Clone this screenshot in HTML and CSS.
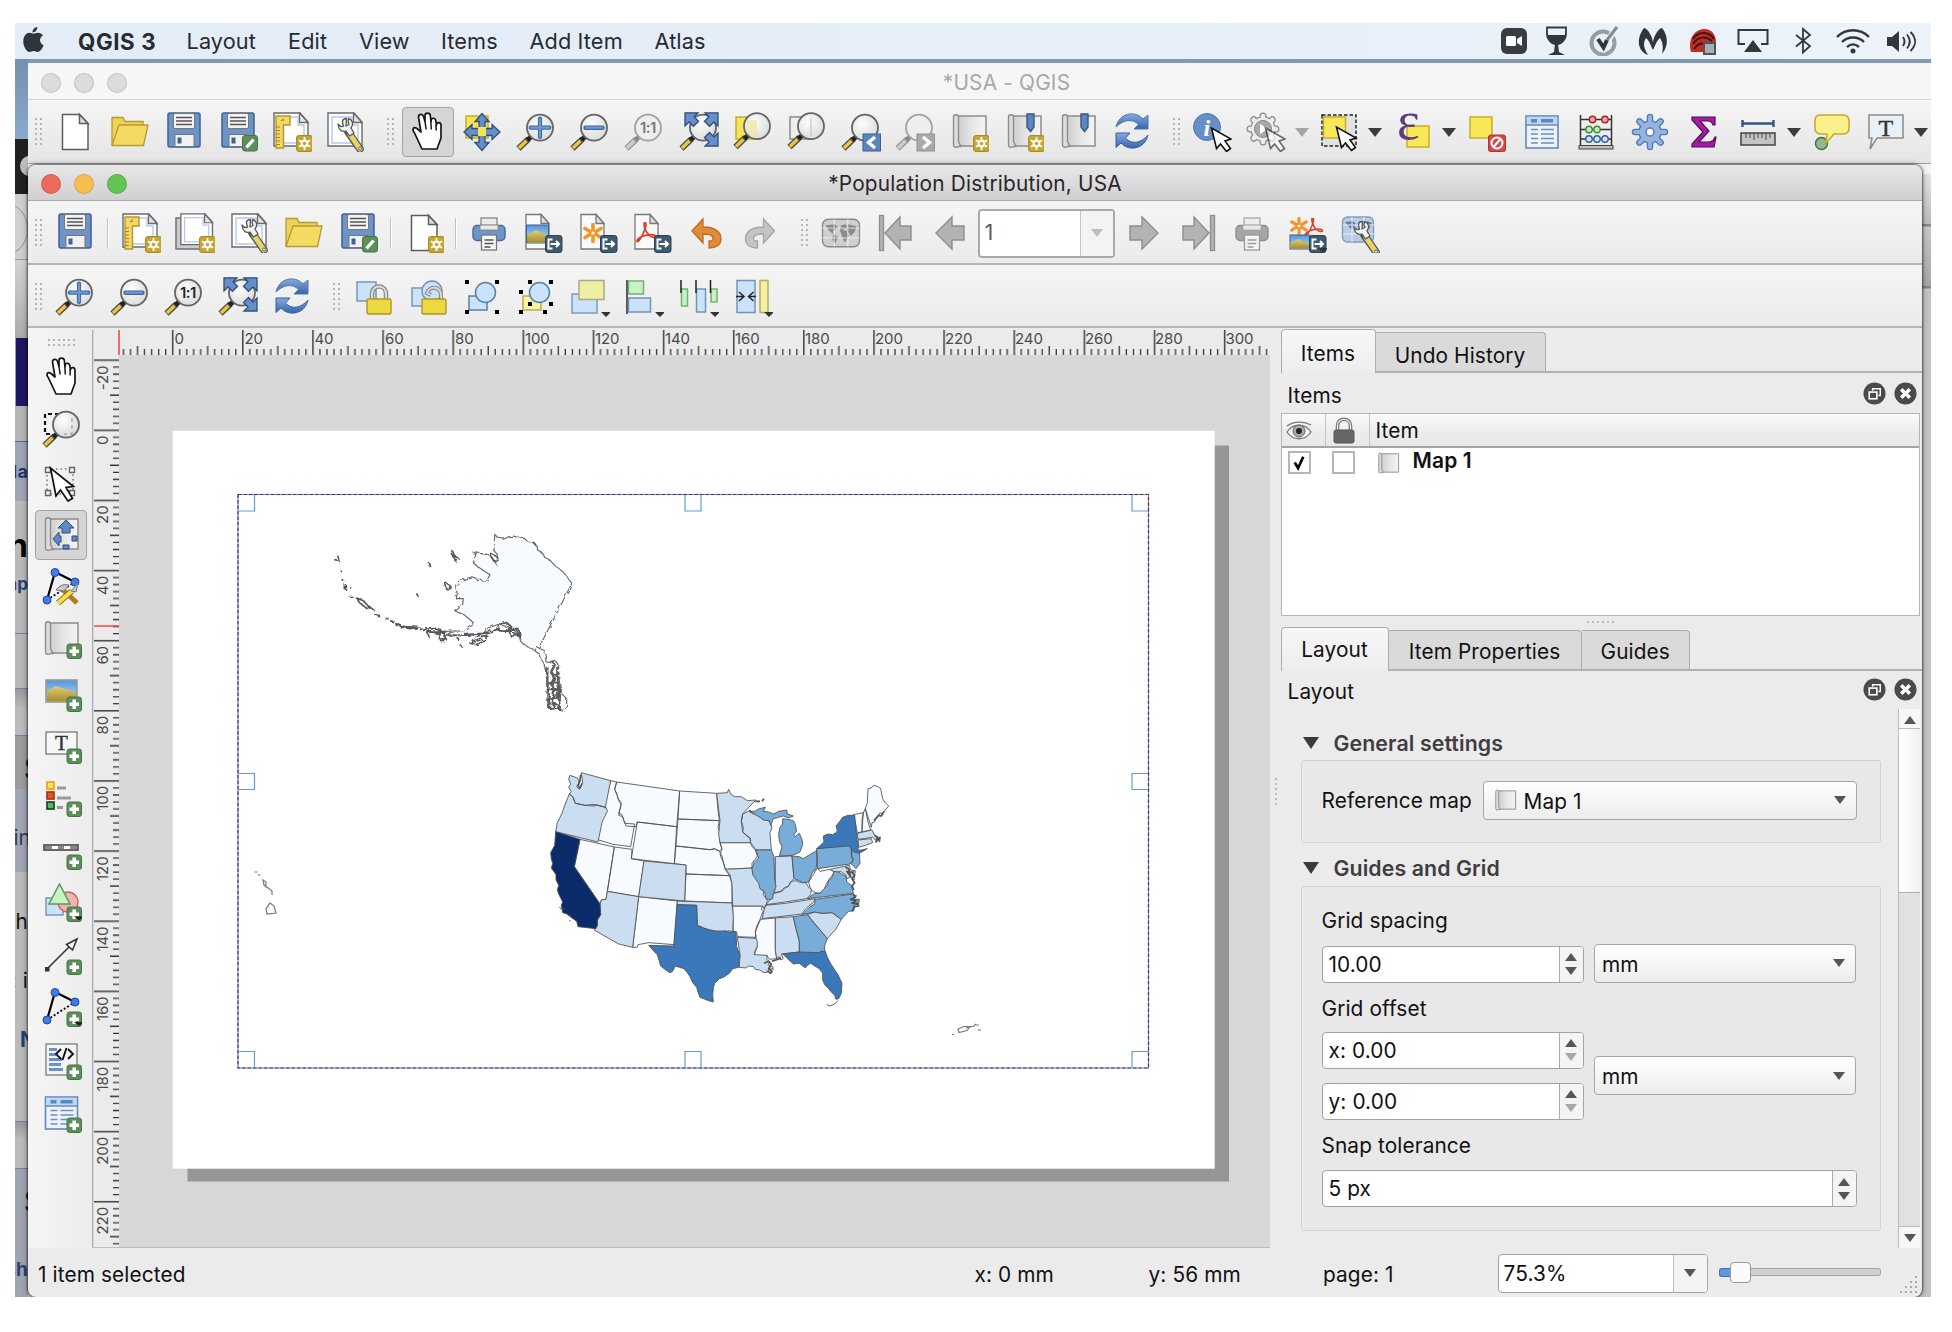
FILE: index.html
```html
<!DOCTYPE html>
<html lang="en">
<head>
<meta charset="utf-8">
<title>Population Distribution, USA</title>
<link rel="stylesheet" href="styles.css">
</head>
<body>
<svg class="defs" width="0" height="0" aria-hidden="true">
<defs>
<linearGradient id="gGrey" x1="0" x2="1" y1="0" y2="0"><stop offset="0" stop-color="#cfcfcf"/><stop offset=".5" stop-color="#e6e6e6"/><stop offset="1" stop-color="#f4f4f4"/></linearGradient>
<linearGradient id="gSky" x1="0" x2="0" y1="0" y2="1"><stop offset="0" stop-color="#4f97e0"/><stop offset="1" stop-color="#c2dff5"/></linearGradient>
<linearGradient id="gSand" x1="0" x2="0" y1="0" y2="1"><stop offset="0" stop-color="#e0cd7a"/><stop offset="1" stop-color="#a58d2c"/></linearGradient>
<linearGradient id="gBlue" x1="0" x2="0" y1="0" y2="1"><stop offset="0" stop-color="#86abdc"/><stop offset="1" stop-color="#3565a8"/></linearGradient>
<radialGradient id="gLens" cx=".4" cy=".35" r=".8"><stop offset="0" stop-color="#fdfdfd"/><stop offset="1" stop-color="#d3d6d4"/></radialGradient>
<filter id="coast" x="-5%" y="-5%" width="110%" height="110%"><feTurbulence type="fractalNoise" baseFrequency=".22" numOctaves="2" seed="4" result="n"/><feDisplacementMap in="SourceGraphic" in2="n" scale="5"/></filter>

<symbol id="star-badge" viewBox="0 0 40 40"><rect x="24.5" y="23.5" width="16" height="16" rx="2.5" fill="#c5a534" stroke="#a98c1e"/><circle cx="32.5" cy="31.5" r="3" fill="none" stroke="#fff" stroke-width="1.8"/><path d="M32.500 25v13M26.900 28.200l11.200 6.600M26.900 34.800l11.200-6.600" stroke="#fff" stroke-width="1.700"/><circle cx="32.500" cy="31.500" r="1.800" fill="#c5a534"/></symbol>
<symbol id="plus-badge" viewBox="0 0 40 40"><rect x="25" y="24" width="14.500" height="14.500" rx="2.500" fill="#5d8f5b" stroke="#487347"/><path d="M32.200 26.500v9.500M27.500 31.200h9.500" stroke="#fff" stroke-width="3.600"/></symbol>
<symbol id="edit-badge" viewBox="0 0 40 40"><rect x="24.500" y="23.500" width="15" height="15.500" rx="2.500" fill="#5d8f5b" stroke="#487347"/><path d="M28.500 35.500l7-8" stroke="#fff" stroke-width="3.400"/></symbol>
<symbol id="export-badge" viewBox="0 0 40 40"><rect x="22.500" y="22.500" width="16.500" height="17" rx="2.500" fill="#3f5a6f" stroke="#2c4355"/><path d="M29.500 26.500h-4v9h4M27.500 31h8M33 28l3 3-3 3" fill="none" stroke="#fff" stroke-width="2"/></symbol>
<symbol id="down" viewBox="0 0 40 40"><path d="M31 35h10l-5 5z" fill="#333"/></symbol>

<symbol id="i-doc" viewBox="0 0 40 40"><path d="M7.500 2.500h17l8.500 9v26h-25.500z" fill="#fff" stroke="#5c5c5c" stroke-width="1.500"/><path d="M24.500 2.500v9h8.500z" fill="#ddd" stroke="#5c5c5c" stroke-width="1.500"/></symbol>
<symbol id="i-folder" viewBox="0 0 40 40"><path d="M2 33.500V5.500h11l2 4h18v6" fill="#eed253" stroke="#b79a33" stroke-width="1.300"/><path d="M2 33.500L9 13h29l-4.500 20.500z" fill="#f4da62" stroke="#b79a33" stroke-width="1.300" stroke-linejoin="round"/></symbol>
<symbol id="i-save" viewBox="0 0 40 40"><rect x="4" y="1" width="32" height="34" rx="2" fill="#6c94c6" stroke="#3e5f94" stroke-width="1.500"/><rect x="9.500" y="1.500" width="21" height="15" rx="1.500" fill="#f4f4f4" stroke="#777"/><path d="M12 5.500h16M12 9h16M12 12.500h16" stroke="#555" stroke-width="1.300"/><rect x="11" y="22.500" width="19" height="12" fill="#f1f1f1" stroke="#777"/><rect x="13.500" y="25.500" width="4" height="6" fill="#3f6397"/></symbol>
<symbol id="i-saveas" viewBox="0 0 40 40"><use href="#i-save"/><use href="#edit-badge"/></symbol>
<symbol id="i-page" viewBox="0 0 40 40"><path d="M2 1h26l8 9v24H2z" fill="#fff" stroke="#6a6a6a" stroke-width="1.400"/><path d="M6 5h20v8h6v18H6z" fill="none" stroke="#b6c9ee" stroke-width="1.400"/><path d="M27.500 1v9.500H36z" fill="#e4e4e4" stroke="#6a6a6a" stroke-width="1.300"/></symbol>
<symbol id="i-layout-new" viewBox="0 0 40 40"><use href="#i-page"/><path d="M4 4h14v9h-6.500v23H4z" fill="#f3d964" stroke="#b39631" stroke-width="1.400"/><path d="M4 15h4M4 18.500h4M4 22h4M4 25.500h4M4 29h4M4 32.500h4" stroke="#a28525"/><path d="M8 9l4-3v3z" fill="#b39631"/><use href="#star-badge"/></symbol>
<symbol id="i-duplicate" viewBox="0 0 40 40"><rect x="1" y="5" width="28" height="31" fill="#ccc" stroke="#6a6a6a" stroke-width="1.400"/><g transform="translate(4 0) scale(.93)"><use href="#i-page" width="40" height="40"/></g><use href="#star-badge"/></symbol>
<symbol id="wrench" viewBox="0 0 40 40"><path d="M22 20L34 37" stroke="#555" stroke-width="7.500" stroke-linecap="round"/><path d="M24 22.500l10 14.500" stroke="#e9d368" stroke-width="5" stroke-linecap="round"/><path d="M20.500 6.500c-5 .5-4.500 3-3 7.500-2.500 2-3.500 0-5.500-2 .5 6 4 8.500 8 7l3.500 5 4.500-3-3-5c3-4 1.500-8.500-2.500-9.500l-.5 3 1 3-3 1.500z" fill="#f2f2f2" stroke="#555" stroke-width="1.300" stroke-linejoin="round"/><circle cx="34" cy="36.500" r="1.500" fill="#fff" stroke="#555"/></symbol>
<symbol id="i-layouts" viewBox="0 0 40 40"><use href="#i-page"/><use href="#wrench"/></symbol>
<symbol id="i-hand" viewBox="0 0 40 40"><path d="M14 37L6.500 21c-3-4-1-6.500 2.500-4.500l4 3.500L10.500 5c0-3 4-3.800 5-.6l1.500 5V3.500c0-3.300 5-3.300 5.300 0l.7 6c0-4.500 4.500-4 4.800-.5l.7 4c.3-3.500 4.500-3 4.500.5V26l-4 11z" fill="#fff" stroke="#161616" stroke-width="1.700" stroke-linejoin="round"/><path d="M17 9.500l1.200 8M22.800 9l.5 8.500M28 12.500l.2 6" stroke="#161616" stroke-width="1.500"/></symbol>
<symbol id="i-pan" viewBox="0 0 40 40"><rect x="4" y="4" width="22" height="22" fill="#f6e356" stroke="#c9ad2a" stroke-width="1.500"/><path d="M20 1.500l7 8h-4v7h7v-4l8 7.500-8 7.500v-4h-7v7h4l-7 8-7-8h4v-7h-7v4l-8-7.500 8-7.500v4h7v-7h-4z" fill="#668fc7" stroke="#2f4d7d" stroke-width="1.300"/><rect x="16" y="15" width="8" height="9" fill="#f6e356"/></symbol>
<symbol id="mag" viewBox="0 0 40 40"><path d="M2.500 36.500L12.500 27" stroke="#4b4b4b" stroke-width="6"/><path d="M3 36l7.500-7.300" stroke="#edc53c" stroke-width="3.400"/><path d="M11.500 28l4.500-4" stroke="#222" stroke-width="5"/><circle cx="24" cy="15.700" r="13" fill="url(#gLens)" stroke="#656565" stroke-width="1.800"/></symbol>
<symbol id="mag-off" viewBox="0 0 40 40"><path d="M2.500 36.500L12.500 27" stroke="#999" stroke-width="6"/><path d="M3 36l7.500-7.300" stroke="#ccc" stroke-width="3.400"/><path d="M11.500 28l4.500-4" stroke="#888" stroke-width="5"/><circle cx="24" cy="15.700" r="13" fill="#eee" stroke="#a3a3a3" stroke-width="1.800"/></symbol>
<symbol id="i-zin" viewBox="0 0 40 40"><use href="#mag"/><path d="M24 6.500v18.500M14.700 15.700h18.600" stroke="#3c66a5" stroke-width="4.200" stroke-linecap="round"/><path d="M24 7v17.500M15.200 15.700h17.600" stroke="#6e98d2" stroke-width="2.200" stroke-linecap="round"/></symbol>
<symbol id="i-zout" viewBox="0 0 40 40"><use href="#mag"/><path d="M15.500 15.700h17" stroke="#3c66a5" stroke-width="4.400" stroke-linecap="round"/><path d="M16 15.700h16" stroke="#6e98d2" stroke-width="2.200" stroke-linecap="round"/></symbol>
<symbol id="i-z11" viewBox="0 0 40 40"><use href="#mag"/><text x="23.800" y="21.200" class="ratio" fill="#222">1:1</text></symbol>
<symbol id="i-z11off" viewBox="0 0 40 40"><use href="#mag-off"/><text x="23.800" y="21.200" class="ratio" fill="#777">1:1</text></symbol>
<symbol id="i-full" viewBox="0 0 40 40"><use href="#mag"/><path d="M6 .8h13l-4 4 4.500 4.500-5 5L10 10l-4 4zM39 .8H26l4 4-4.500 4.500 5 5L35 10l4 4zM39 34H26l4-4-4.500-4.500 5-5L35 25l4-4z" fill="#668fc7" stroke="#2f4d7d" stroke-width="1.300"/></symbol>
<symbol id="i-zsel" viewBox="0 0 40 40"><rect x="3" y="5" width="21" height="22" fill="#f6e356" stroke="#c9ad2a" stroke-width="1.500"/><g transform="translate(0 -1.500)"><use href="#mag" width="40" height="40"/></g><path d="M14 8h10v17h-6q-6-7-4-17z" fill="#efe7a0" opacity=".7"/></symbol>
<symbol id="i-zlayer" viewBox="0 0 40 40"><rect x="3" y="5" width="21" height="22" fill="#eee" stroke="#8a8a8a" stroke-width="1.500"/><g transform="translate(0 -1.500)"><use href="#mag" width="40" height="40"/></g><path d="M24 6v18" stroke="#bbb"/></symbol>
<symbol id="i-zlast" viewBox="0 0 40 40"><use href="#mag"/><rect x="22" y="22" width="17.500" height="17" fill="#5b84bb" stroke="#3d5f92"/><path d="M34 25l-6.500 5.500L34 36" fill="none" stroke="#fff" stroke-width="3.400"/></symbol>
<symbol id="i-znext" viewBox="0 0 40 40"><use href="#mag-off"/><rect x="22" y="22" width="17.500" height="17" fill="#a9a9a9" stroke="#929292"/><path d="M28 25l6.500 5.500L28 36" fill="none" stroke="#fff" stroke-width="3.400"/></symbol>
<symbol id="i-map" viewBox="0 0 40 40"><path d="M9 4h28v30H9z" fill="url(#gGrey)" stroke="#8d8d8d" stroke-width="1.500"/><path d="M9.500 30V5c0-3-5-3-5 0v28c0 2.500 3 3 5 1.500H12c-1-1.500-1.500-4-2.500-4.500z" fill="#dcdcdc" stroke="#8d8d8d" stroke-width="1.400"/></symbol>
<symbol id="i-mapnew" viewBox="0 0 40 40"><use href="#i-map"/><use href="#star-badge"/></symbol>
<symbol id="ribbon" viewBox="0 0 40 40"><path d="M23 2h7v13l-3.500 4.500L23 15z" fill="#5d86bf" stroke="#36568b" stroke-width="1.400"/></symbol>
<symbol id="i-bmnew" viewBox="0 0 40 40"><use href="#i-map"/><use href="#ribbon"/><use href="#star-badge"/></symbol>
<symbol id="i-bm" viewBox="0 0 40 40"><use href="#i-map"/><use href="#ribbon"/></symbol>
<symbol id="i-refresh" viewBox="0 0 40 40"><path d="M4 15C7 1 23-2 31 7l5-4v14H22l4.500-4.500C20 6 11 8 4 15z" fill="url(#gBlue)" stroke="#4a75b3"/><path d="M36 23c-3 14-19 17-27 8l-5 4.500V21h14l-4.500 5C20 33 29 31 36 23z" fill="url(#gBlue)" stroke="#355f9f"/></symbol>
<symbol id="cursor" viewBox="0 0 40 40"><path d="M20 15v19l4.500-4 4 8.500 4.500-2.500-4.500-8H35z" fill="#fff" stroke="#111" stroke-width="1.500"/></symbol>
<symbol id="cursor-tilt" viewBox="0 0 40 40"><path d="M18 15l5 20.500 4-4.500 6 7.500 4-3-5.500-7.500 6-2z" fill="#fff" stroke="#111" stroke-width="1.600"/></symbol>
<symbol id="i-info" viewBox="0 0 40 40"><circle cx="15" cy="15" r="13.500" fill="#668fc7" stroke="#5079b3"/><text x="15" y="23.500" class="info-i">i</text><g transform="translate(1.500 1)"><use href="#cursor-tilt" width="40" height="40"/></g></symbol>
<symbol id="i-action" viewBox="0 0 40 40"><g stroke="#8a8a8a" stroke-width="7" stroke-linecap="round"><path d="M17 4v26M4 17h26M7.800 7.800l18.400 18.400M7.800 26.200L26.200 7.800"/></g><circle cx="17" cy="17" r="12.700" fill="#8a8a8a"/><g stroke="#ececec" stroke-width="4.600" stroke-linecap="round"><path d="M17 4v26M4 17h26M7.800 7.800l18.400 18.400M7.800 26.200L26.200 7.800"/></g><circle cx="17" cy="17" r="11.500" fill="#ececec"/><circle cx="17" cy="17" r="8.500" fill="#aaa" stroke="#888"/><path d="M14 12l8 5-8 5z" fill="#fff"/><g transform="translate(1.500 1)" opacity=".6"><use href="#cursor-tilt" width="40" height="40"/></g></symbol>
<symbol id="i-select" viewBox="0 0 40 40"><rect x="2" y="3" width="34" height="31" fill="#e2e2e2" stroke="#222" stroke-width="1.500" stroke-dasharray="3.500 2"/><rect x="3.500" y="5" width="22" height="21" fill="#f8e757" stroke="#c9ad2a" stroke-width="1.500"/><g transform="translate(-1.500 0)"><use href="#cursor-tilt" width="40" height="40"/></g></symbol>
<symbol id="i-expr" viewBox="0 0 40 40"><rect x="13" y="14" width="22" height="21" fill="#f8e757" stroke="#c9ad2a" stroke-width="1.500"/><text x="3" y="26.500" class="eps">ε</text></symbol>
<symbol id="i-desel" viewBox="0 0 40 40"><rect x="3" y="5" width="22" height="21" fill="#f8e757" stroke="#c9ad2a" stroke-width="1.500"/><rect x="21.500" y="23" width="17" height="16.500" rx="2" fill="#d84848" stroke="#b32e2e"/><circle cx="30" cy="31" r="5.500" fill="none" stroke="#fff" stroke-width="2"/><path d="M26.500 35l7-8" stroke="#fff" stroke-width="2"/></symbol>
<symbol id="i-table" viewBox="0 0 40 40"><rect x="4" y="4" width="32" height="32" fill="#eef3fa" stroke="#6288c2" stroke-width="1.600"/><rect x="4.800" y="4.800" width="30.400" height="7.700" fill="#bcd7ef"/><path d="M4 13h32" stroke="#6288c2" stroke-width="1.500"/><path d="M9 8.700h6M19 8.700h12" stroke="#5e86bf" stroke-width="3.400"/><path d="M9 17.500h7M19 17.500h13M9 22h7M19 22h13M9 26.500h7M19 26.500h13M9 31h7M19 31h13" stroke="#6b8fc4" stroke-width="1.500"/></symbol>
<symbol id="i-abacus" viewBox="0 0 40 40"><path d="M4.500 3v31M35.500 3v31M4 7.500h32M4 17.500h32M4 27h32" stroke="#333" stroke-width="1.500" fill="none"/><rect x="3" y="33.500" width="34" height="3.500" fill="#bbb" stroke="#444"/><g stroke-width="1.400"><circle cx="16.500" cy="7.500" r="3.200" fill="#f2a0a0" stroke="#a32424"/><circle cx="29" cy="7.500" r="3.200" fill="#f2a0a0" stroke="#a32424"/><circle cx="13" cy="17.500" r="3.200" fill="#c5efb9" stroke="#3e8b3e"/><circle cx="21" cy="17.500" r="3.200" fill="#c5efb9" stroke="#3e8b3e"/><circle cx="13" cy="27" r="3.200" fill="#cfe1f5" stroke="#33609a"/><circle cx="21" cy="27" r="3.200" fill="#cfe1f5" stroke="#33609a"/><circle cx="29" cy="27" r="3.200" fill="#cfe1f5" stroke="#33609a"/></g></symbol>
<symbol id="i-gear" viewBox="0 0 40 40"><g stroke="#4c7cc0" stroke-width="6.500" stroke-linecap="round"><path d="M20 5v30M5 20h30M9.400 9.400l21.200 21.200M9.400 30.600l21.200-21.200"/></g><circle cx="20" cy="20" r="11.700" fill="#4c7cc0"/><g stroke="#97b3de" stroke-width="3.800" stroke-linecap="round"><path d="M20 5v30M5 20h30M9.400 9.400l21.200 21.200M9.400 30.600l21.200-21.200"/></g><circle cx="20" cy="20" r="10.400" fill="#97b3de"/><circle cx="20" cy="20" r="4" fill="#fff" stroke="#4c7cc0" stroke-width="1.500"/></symbol>
<symbol id="i-sigma" viewBox="0 0 40 40"><path d="M8 5h23v8h-2c-1-3-2-4-5-4h-8l9 10-10 11h10c3 0 5-2 6-5h1l-2 10H8v-3l11-12L8 8z" fill="#a51ba5" stroke="#4e0f55" stroke-width="1.200"/></symbol>
<symbol id="i-measure" viewBox="0 0 40 40"><path d="M4 11.500h32M4.500 8v7M35.500 8v7" stroke="#33557f" stroke-width="2.400"/><rect x="3" y="21" width="34" height="12" fill="#c4c4c4" stroke="#444" stroke-width="1.500"/><path d="M8 21v5M12 21v5M16 21v7M20 21v5M24 21v5M28 21v7M32 21v5" stroke="#444"/></symbol>
<symbol id="i-tip" viewBox="0 0 40 40"><circle cx="9.500" cy="31.500" r="6" fill="#8dbb86" stroke="#47694a" stroke-width="1.400"/><path d="M8 3h23q6 0 6 6v7q0 6-6 6h-9l-8 9 1-9H9q-6 0-6-6V9q0-6 5-6z" fill="#fbf08c" stroke="#c6a92a" stroke-width="1.600"/></symbol>
<symbol id="i-textann" viewBox="0 0 40 40"><path d="M3 3h34v23H11L4 37l2-11H3z" fill="#e8f1f8" stroke="#8a8a8a" stroke-width="1.500"/><text x="20" y="23.500" class="tee">T</text></symbol>
<symbol id="i-newpage" viewBox="0 0 40 40"><use href="#i-doc"/><use href="#star-badge"/></symbol>
<symbol id="i-print" viewBox="0 0 40 40"><rect x="12" y="5" width="16" height="12" fill="#ececec" stroke="#888" stroke-width="1.300"/><rect x="4" y="12.500" width="32" height="15" rx="4" fill="#6e95c8" stroke="#46689c" stroke-width="1.400"/><path d="M11 12h18v5H11z" fill="#e9e9e9" stroke="#888"/><rect x="12.500" y="22" width="15" height="15" fill="#f6f6f6" stroke="#777" stroke-width="1.300"/><path d="M15.500 27h9M15.500 30.500h9M15.500 34h6" stroke="#555" stroke-width="1.300"/></symbol>
<symbol id="i-printoff" viewBox="0 0 40 40"><rect x="12" y="5" width="16" height="12" fill="#ececec" stroke="#aaa" stroke-width="1.300"/><rect x="4" y="12.500" width="32" height="15" rx="4" fill="#a5a5a5" stroke="#8d8d8d" stroke-width="1.400"/><path d="M11 12h18v5H11z" fill="#e9e9e9" stroke="#aaa"/><rect x="12.500" y="22" width="15" height="15" fill="#f6f6f6" stroke="#999" stroke-width="1.300"/><path d="M15.500 27h9M15.500 30.500h9M15.500 34h6" stroke="#999" stroke-width="1.300"/></symbol>
<symbol id="sheet" viewBox="0 0 40 40"><path d="M3 1.500h15l8 9V36H3z" fill="#fafafa" stroke="#777" stroke-width="1.300"/><path d="M18 1.500v9h8z" fill="#ddd" stroke="#777" stroke-width="1.300"/></symbol>
<symbol id="i-eimg" viewBox="0 0 40 40"><use href="#sheet"/><g transform="translate(3.500 12)"><rect width="22" height="18" fill="url(#gSky)" stroke="#3d6187"/><path d="M.5 10l9-5 12 5v7.500H.5z" fill="url(#gSand)"/></g><use href="#export-badge"/></symbol>
<symbol id="flower" viewBox="0 0 20 20"><path d="M10 1.500v5.500M10 18.500V13M2 5.500l5 3M18 14.500l-5-3M2 14.500l5-3M18 5.500l-5 3" stroke="#f2952d" stroke-width="3.600" stroke-linecap="round"/></symbol>
<symbol id="i-esvg" viewBox="0 0 40 40"><use href="#sheet"/><use href="#flower" x="5" y="10" width="20" height="20" overflow="visible"/><use href="#export-badge"/></symbol>
<symbol id="pdf" viewBox="0 0 20 20"><path d="M8 0c3 0 1 6-1 10-2 5-5 9-6 8s3-5 9-6 9 0 9 1.500-4 1-7-2S7 3 8 0z" fill="none" stroke="#df3c28" stroke-width="1.600"/></symbol>
<symbol id="i-epdf" viewBox="0 0 40 40"><use href="#sheet"/><use href="#pdf" x="4" y="9" width="21" height="22" overflow="visible"/><use href="#export-badge"/></symbol>
<symbol id="i-undo" viewBox="0 0 40 40"><path d="M6 18L17 6v8c12 0 18 5 18 12 0 6-5 9-12 9v-7c3 0 4-.5 4-3 0-3-4-4-10-4v9z" fill="#e18a3a" stroke="#c06c1f" stroke-width="1.300"/></symbol>
<symbol id="i-redo" viewBox="0 0 40 40"><path d="M34.500 18l-11-12v8c-12 0-18 5-18 12 0 6 5 9 12 9v-7c-3 0-4-.5-4-3 0-3 4-4 10-4v9z" fill="#c4c4c4" stroke="#a5a5a5" stroke-width="1.300"/></symbol>
<symbol id="world" viewBox="0 0 40 30"><rect x="1" y="1" width="38" height="28" rx="6" stroke-width="1.500"/><path d="M4 7l10-1 3 3-5 4v3l-4-3zM12 16l5 3-3 7-3-4zM20 7l5-1 1 4-5 2 5 1 2 5-4 7-3-7-2-5zM27 6l9 2-2 6-4 4-4-6z" class="land"/><path d="M13 1v28M27 1v28M1 10h38M1 20h38" stroke="#fff" stroke-width="1" opacity=".7"/></symbol>
<symbol id="i-atlas" viewBox="0 0 40 40"><use href="#world" x="0.500" y="5" width="39" height="30" fill="#cfcfcf" stroke="#8a8a8a"/></symbol>
<symbol id="i-prev" viewBox="0 0 40 40"><path d="M6 20L22 4v9h12v14H22v9z" fill="#b3b3b3" stroke="#8e8e8e" stroke-width="1.400"/></symbol>
<symbol id="i-first" viewBox="0 0 40 40"><rect x="3.500" y="2.500" width="4" height="35" fill="#b3b3b3" stroke="#8e8e8e" stroke-width="1.300"/><path d="M9 20L24 4v9h11v14H24v9z" fill="#b3b3b3" stroke="#8e8e8e" stroke-width="1.400"/></symbol>
<symbol id="i-next" viewBox="0 0 40 40"><g transform="translate(40 0) scale(-1 1)"><use href="#i-prev" width="40" height="40"/></g></symbol>
<symbol id="i-last" viewBox="0 0 40 40"><g transform="translate(40 0) scale(-1 1)"><use href="#i-first" width="40" height="40"/></g></symbol>
<symbol id="i-eatlas" viewBox="0 0 40 40"><use href="#flower" x="3" y="4" width="18" height="18" overflow="visible"/><use href="#pdf" x="17" y="5" width="20" height="19" overflow="visible"/><g transform="translate(3 22)"><rect width="20" height="14" fill="url(#gSky)" stroke="#3d6187"/><path d="M.5 8l8-4 11 5v4.500H.5z" fill="url(#gSand)"/></g><use href="#export-badge"/><use href="#down"/></symbol>
<symbol id="i-atlasset" viewBox="0 0 40 40"><rect x="1.500" y="4" width="31" height="25" rx="5" fill="#b9cce4" stroke="#7f9cc2" stroke-width="1.400"/><path d="M4 9l8-1 3 3-5 5zM18 8l5 1-2 5zM26 8l5 2-3 6z" fill="#5f7ea9"/><path d="M11 4v25M23 4v25M2 12h31M2 21h31" stroke="#e6eef8"/><g transform="translate(1 2)"><use href="#wrench" width="40" height="40"/></g></symbol>
<symbol id="i-lock" viewBox="0 0 40 40"><rect x="4" y="5" width="19" height="19" fill="#cbe3fa" stroke="#6f93b3" stroke-width="1.400"/><path d="M19 24v-7c0-10 14-10 14 0v7" fill="none" stroke="#888" stroke-width="4.500"/><path d="M19 24v-7c0-10 14-10 14 0v7" fill="none" stroke="#ddd" stroke-width="2"/><rect x="14" y="22" width="24" height="15" rx="1.500" fill="#ecd83f" stroke="#b0962a" stroke-width="1.400"/></symbol>
<symbol id="i-unlock" viewBox="0 0 40 40"><rect x="4" y="11" width="18" height="18" fill="#cbe3fa" stroke="#6f93b3" stroke-width="1.400"/><circle cx="24" cy="14" r="10" fill="#cbe3fa" stroke="#6f93b3" stroke-width="1.400"/><path d="M33 24v-5c0-10-11-11-14-3l4 2" fill="none" stroke="#888" stroke-width="4"/><path d="M33 24v-5c0-10-11-11-14-3l4 2" fill="none" stroke="#ddd" stroke-width="1.800"/><rect x="14" y="22" width="24" height="15" rx="1.500" fill="#ecd83f" stroke="#b0962a" stroke-width="1.400"/></symbol>
<symbol id="i-group" viewBox="0 0 40 40"><rect x="7" y="19" width="18" height="14" fill="#cbe3fa" stroke="#5780aa" stroke-width="1.500"/><circle cx="23.500" cy="15.500" r="10" fill="#cbe3fa" stroke="#5780aa" stroke-width="1.500"/><path d="M3 3h4v4H3zM33 3h4v4h-4zM3 33h4v4H3zM33 33h4v4h-4z" fill="#000"/></symbol>
<symbol id="i-ungroup" viewBox="0 0 40 40"><rect x="7" y="19" width="18" height="14" fill="#f6f2a6" stroke="#b8ac55" stroke-width="1.500"/><circle cx="23.500" cy="15.500" r="10" fill="#cbe3fa" stroke="#5780aa" stroke-width="1.500"/><path d="M12 3h4v4h-4zM33 3h4v4h-4zM3 13h4v4H3zM12 25h4v4h-4zM33 25h4v4h-4zM3 33h4v4H3zM27 33h4v4h-4z" fill="#000"/></symbol>
<symbol id="i-raise" viewBox="0 0 40 40"><rect x="2" y="17" width="25" height="19" fill="#cbe3fa" stroke="#7c9cba" stroke-width="1.500"/><rect x="9" y="3.500" width="25" height="19" fill="#efefa3" stroke="#aaa98a" stroke-width="1.500"/><use href="#down"/></symbol>
<symbol id="i-align" viewBox="0 0 40 40"><path d="M3 3v34" stroke="#222" stroke-width="1.500"/><rect x="4.500" y="4" width="15" height="13" fill="#c6f3c2" stroke="#78ae78" stroke-width="1.500"/><rect x="4.500" y="21" width="22" height="14" fill="#cbe3fa" stroke="#7094b5" stroke-width="1.500"/><use href="#down"/></symbol>
<symbol id="i-distr" viewBox="0 0 40 40"><rect x="2.500" y="12" width="6" height="17" fill="#c6f3c2" stroke="#78ae78" stroke-width="1.500"/><rect x="17.500" y="12" width="9" height="23" fill="#cbe3fa" stroke="#7094b5" stroke-width="1.500"/><rect x="32" y="12" width="6" height="13" fill="#c6f3c2" stroke="#78ae78" stroke-width="1.500"/><path d="M2 3v13M17 3v13M31.500 3v13" stroke="#222" stroke-width="1.500"/><use href="#down"/></symbol>
<symbol id="i-resize" viewBox="0 0 40 40"><rect x="4" y="3.500" width="18" height="32" fill="#cbe3fa" stroke="#7094b5" stroke-width="1.500"/><rect x="27" y="3.500" width="8" height="32" fill="#f3f0a2" stroke="#b8ac55" stroke-width="1.500"/><path d="M3 19.500h7M6 15l5 4.500L6 24M23 19.500h-7M20.500 15l-5 4.500 5 4.500" fill="none" stroke="#222" stroke-width="1.500"/><use href="#down"/></symbol>
<symbol id="i-zoomtool" viewBox="0 0 40 40"><path d="M17 4H3v20h8" fill="none" stroke="#111" stroke-width="2.200" stroke-dasharray="4 3"/><g transform="translate(0 -1)"><use href="#mag" width="40" height="40"/></g><path d="M30 8v16h-8" fill="none" stroke="#aaa" stroke-width="1.500" stroke-dasharray="4 3"/></symbol>
<symbol id="i-selmove" viewBox="0 0 40 40"><rect x="5" y="7" width="26" height="25" fill="none" stroke="#777" stroke-width="1.600" stroke-dasharray="1.500 3"/><path d="M3.500 5.500h5v5h-5zM27.500 5.500h5v5h-5zM3.500 28.500h5v5h-5zM27.500 28.500h5v5h-5z" fill="#eee" stroke="#666" stroke-width="1.400"/><path d="M8.500 6l5.500 28 4.500-6 7.500 11 4.500-2.500-6.500-11 7.500-1z" fill="#fff" stroke="#111" stroke-width="1.700"/></symbol>
<symbol id="i-content" viewBox="0 0 40 40"><g transform="translate(-1 0)"><use href="#i-map" width="40" height="40"/></g><path d="M24 5l8 8h-4v5h-8v-5h-4zM11 24l6-7v4h2v6h-2v4zM30 21h5v5h-5zM21 30h6v4h-6z" fill="#5f89c2" stroke="#2f4d7d"/></symbol>
<symbol id="i-nodes" viewBox="0 0 40 40"><path d="M13 4L5 32M13 4l20 10" stroke="#000" stroke-width="2.200"/><path d="M5 32l28-18" stroke="#000" stroke-width="1.800" stroke-dasharray="2 2"/><g fill="#3f7bf0" stroke="#24468f"><circle cx="13" cy="4.500" r="4"/><circle cx="33" cy="14" r="4"/><circle cx="5" cy="32" r="4"/></g></symbol>
<symbol id="i-editnodes" viewBox="0 0 40 40"><use href="#i-nodes"/><path d="M20 21l15 14" stroke="#b57a22" stroke-width="5"/><path d="M16 35l14-12" stroke="#8b7714" stroke-width="6"/><path d="M16 35l14-12" stroke="#f4e04f" stroke-width="4"/><path d="M14 22q5-7 13-5l-5 6zM29 23l7-8-2 9z" fill="#c9c9c9" stroke="#777"/></symbol>
<symbol id="i-addmap" viewBox="0 0 40 40"><g transform="translate(-1 -1)"><use href="#i-map" width="40" height="40"/></g><use href="#plus-badge"/></symbol>
<symbol id="i-addimg" viewBox="0 0 40 40"><rect x="4" y="7" width="31" height="22" fill="url(#gSky)" stroke="#999" stroke-width="1.600"/><path d="M5 18l9-5 20 6v9.300H5z" fill="url(#gSand)"/><use href="#plus-badge"/></symbol>
<symbol id="i-addlabel" viewBox="0 0 40 40"><rect x="4" y="7" width="31" height="22" fill="#f6f6f6" stroke="#888" stroke-width="1.500"/><text x="19.500" y="24.500" class="tee small">T</text><use href="#plus-badge"/></symbol>
<symbol id="i-legend" viewBox="0 0 40 40"><g stroke-width="1.600"><rect x="5" y="4" width="7" height="7" fill="#ffe04d" stroke="#f09a21"/><rect x="5" y="14" width="7" height="7" fill="#e8552b" stroke="#a52d12"/><rect x="5" y="24" width="7" height="7" fill="#57b85b" stroke="#123c1c"/></g><path d="M15 10h9M15 20h14M15 29.500h6" stroke="#999" stroke-width="2.800"/><use href="#plus-badge"/></symbol>
<symbol id="i-scale" viewBox="0 0 40 40"><rect x="2" y="14" width="34" height="5" fill="#fff" stroke="#444" stroke-width="1.600"/><path d="M3 16.500h7M16 16.500h6M28 16.500h7" stroke="#888" stroke-width="3"/><use href="#plus-badge"/></symbol>
<symbol id="i-shape" viewBox="0 0 40 40"><rect x="4" y="15" width="17" height="17" fill="#cbe3fa" stroke="#6f93b3" stroke-width="1.400"/><circle cx="26" cy="19" r="10" fill="#f2b3b3" stroke="#c96363" stroke-width="1.400"/><path d="M17.500 1L28 21H7z" fill="#c6f3c2" stroke="#5e985e" stroke-width="1.500"/><use href="#plus-badge"/><path d="M32 33.500h10l-5 4z" fill="#222"/></symbol>
<symbol id="i-arrow" viewBox="0 0 40 40"><path d="M5 33L31 7" stroke="#333" stroke-width="1.600"/><rect x="3" y="31" width="4.500" height="4.500" fill="#333"/><path d="M35 3L24.500 8.500l6 5.500z" fill="#f4f4f4" stroke="#333" stroke-width="1.500"/><use href="#plus-badge"/></symbol>
<symbol id="i-addnodes" viewBox="0 0 40 40"><use href="#i-nodes"/><use href="#plus-badge"/><path d="M32 34h10l-5 4z" fill="#222"/></symbol>
<symbol id="i-html" viewBox="0 0 40 40"><rect x="4" y="3" width="31" height="31" fill="#f4f4f4" stroke="#8a8a8a" stroke-width="1.500"/><path d="M7 8.500h8M7 13.500h7M7 18.500h13M7 23.500h12M7 28.500h14" stroke="#6b92c9" stroke-width="3.200"/><path d="M19 8l-5 5 5 5M26 8l5 5-5 5M24.500 7l-4 12" fill="none" stroke="#111" stroke-width="1.900"/><use href="#plus-badge"/></symbol>
<symbol id="i-addtable" viewBox="0 0 40 40"><g transform="translate(-.5 -1)"><use href="#i-table" width="40" height="40"/></g><use href="#plus-badge"/></symbol>
<symbol id="dock-float" viewBox="0 0 24 24"><circle cx="12" cy="12" r="11.500" fill="#4a4a4a"/><path d="M10 9V7h8v7h-2" fill="none" stroke="#fff" stroke-width="1.500"/><rect x="6.500" y="10.500" width="8" height="7" fill="none" stroke="#fff" stroke-width="1.700"/></symbol>
<symbol id="dock-close" viewBox="0 0 24 24"><circle cx="12" cy="12" r="11.500" fill="#4a4a4a"/><path d="M7.500 7.500l9 9M16.500 7.500l-9 9" stroke="#fff" stroke-width="3.600"/></symbol>

<pattern id="hticks" x="171.900" y="330" width="70.130" height="25" patternUnits="userSpaceOnUse"><path d="M.8 0v25" stroke="#333" stroke-width="1.400"/><path d="M7.800 19v6M14.800 19v6M21.800 19v6M28.800 19v6M42.800 19v6M49.900 19v6M56.900 19v6M63.900 19v6M35.800 16v9" stroke="#333" stroke-width="1.300"/></pattern>
<pattern id="vticks" x="94" y="429.500" width="25" height="70.130" patternUnits="userSpaceOnUse"><path d="M0 .8h25" stroke="#333" stroke-width="1.400"/><path d="M19 7.800h6M19 14.800h6M19 21.800h6M19 28.800h6M19 42.800h6M19 49.900h6M19 56.900h6M19 63.900h6M16 35.800h9" stroke="#333" stroke-width="1.300"/></pattern>
</defs>
</svg>

<main class="desktop">
  <header class="menubar">
    <svg class="apple" viewBox="0 0 22 28"><path d="M15 1c.2 3-2.200 5.700-5 5.600C9.800 3.800 12.300 1.200 15 1zM11 8c1.400 0 2.600-1 4.800-1 2 0 4 1.100 5 2.800-4.300 2.500-3.600 8.500.8 10.200C20.500 23 18 27 15.500 27c-1.700 0-2.300-1-4.400-1-2 0-2.700 1-4.200 1C3.500 27 0 20.500.3 15.500.5 10.500 3.500 7 6.800 7c1.900 0 3.100 1 4.200 1z" fill="#2f353b"/></svg>
    <b class="m-app">QGIS 3</b><span class="m-layout">Layout</span><span class="m-edit">Edit</span><span class="m-view">View</span><span class="m-items">Items</span><span class="m-add">Add Item</span><span class="m-atlas">Atlas</span>
    <div class="tray">
      <svg class="w42" viewBox="0 0 42 30"><rect x="9" y="2" width="26" height="26" rx="6" fill="#383d42"/><rect x="14" y="10" width="10" height="10" rx="1.500" fill="#fff"/><path d="M25 13l5-3v10l-5-3z" fill="#fff"/></svg>
      <svg class="w46" viewBox="0 0 46 30"><path d="M13 1.500h19v6c0 13-19 13-19 0zM22.500 17v10" fill="none" stroke="#33383d" stroke-width="1.800"/><path d="M13 9h19c-1 9-7 10-9.500 10S14 18 13 9zM21 18h3l1 8 6 3H14l6-3z" fill="#33383d"/></svg>
      <svg class="w48" viewBox="0 0 48 30"><circle cx="23" cy="17" r="11.500" fill="none" stroke="#979da2" stroke-width="4"/><path d="M19 14l5 8L36 1" fill="none" stroke="#e8eff6" stroke-width="6"/><path d="M18 13l5.500 8.500L27 14" fill="none" stroke="#30363b" stroke-width="4"/><path d="M27 14l10-13" stroke="#83898e" stroke-width="3"/></svg>
      <svg class="w50" viewBox="0 0 50 30"><path d="M16 2c4 0 9 10 9 15 0-5 5-15 9-15 6 7 7 18 0 26 2-8 0-13-2-16-3 2-5 8-7 12-2-4-4-10-7-12-2 3-4 8 2 17-13-5-10-20-4-27z" fill="#2f353a"/></svg>
      <svg class="w50" viewBox="0 0 50 30"><path d="M13 26C9 12 18 3 26 3c9 0 12 7 12 14v9z" fill="#c52b24"/><path d="M15 13c5-8 16-8 21 0M15 18c5-8 13-8 19-3M16 23c4-6 8-6 12-5" fill="none" stroke="#3c1515" stroke-width="2"/><rect x="26" y="17" width="11" height="11" fill="#a7aeb6" stroke="#4c545c" stroke-width="2"/></svg>
      <svg class="w50" viewBox="0 0 50 30"><path d="M17 18h-6.500V4h29v14H33" fill="none" stroke="#33383d" stroke-width="2"/><path d="M25 14l9 12H16z" fill="#33383d"/></svg>
      <svg class="w50" viewBox="0 0 50 30"><path d="M18 9l14 11-7 6.500V3l7 6-14 11.500" fill="none" stroke="#33383d" stroke-width="1.800"/></svg>
      <svg class="w50" viewBox="0 0 50 30"><path d="M9 11c9-9 23-9 32 0M14 16c6-6 16-6 22 0M19 21c4-3.500 8-3.500 12 0" fill="none" stroke="#33383d" stroke-width="2.400"/><circle cx="25" cy="25" r="2.500" fill="#33383d"/></svg>
      <svg class="w46" viewBox="0 0 46 30"><path d="M9 11h5l7-6v21l-7-6H9z" fill="#33383d"/><path d="M25 11c2 3 2 6 0 9M29 8.500c4 5 4 9 0 14M32.500 6c6 6 6 13 0 19" fill="none" stroke="#33383d" stroke-width="1.900"/></svg>
    </div>
  </header>

  <div class="backdrop">
    <div class="strip">
      <div class="s-sky"></div><div class="s-black"><i></i></div><div class="s-round"><i></i></div><div class="s-grey"></div>
      <div class="s-navy"></div><div class="s-gap"></div>
      <div class="s-blue"><b>Ma</b></div>
      <div class="s-head"><b class="big">h</b><b class="sm">ap</b></div>
      <div class="s-line"></div><div class="s-line2"></div>
      <div class="s-s"><span>S</span></div><div class="s-in"><span>in</span></div>
      <div class="s-th"><span>Th</span><span>: i</span><b>N</b></div>
      <div class="s-line3"></div>
      <div class="s-end"><span>S</span><b>sh</b></div>
    </div>
  </div>

  <section class="window main-window">
    <div class="titlebar inactive"><span class="lights"><i></i><i></i><i></i></span><h1>*USA - QGIS</h1></div>
    <div class="toolbar">
      <i class="grip first"></i>
      <svg class="ic"><use href="#i-doc"/></svg><svg class="ic"><use href="#i-folder"/></svg><svg class="ic"><use href="#i-save"/></svg><svg class="ic"><use href="#i-saveas"/></svg><svg class="ic"><use href="#i-layout-new"/></svg><svg class="ic"><use href="#i-layouts"/></svg>
      <i class="grip"></i>
      <span class="pressed"><svg class="ic"><use href="#i-hand"/></svg></span><svg class="ic"><use href="#i-pan"/></svg><svg class="ic"><use href="#i-zin"/></svg><svg class="ic"><use href="#i-zout"/></svg><svg class="ic"><use href="#i-z11off"/></svg><svg class="ic"><use href="#i-full"/></svg><svg class="ic"><use href="#i-zsel"/></svg><svg class="ic"><use href="#i-zlayer"/></svg><svg class="ic"><use href="#i-zlast"/></svg><svg class="ic"><use href="#i-znext"/></svg><svg class="ic"><use href="#i-mapnew"/></svg><svg class="ic"><use href="#i-bmnew"/></svg><svg class="ic"><use href="#i-bm"/></svg><svg class="ic"><use href="#i-refresh"/></svg>
      <i class="grip third"></i>
      <svg class="ic"><use href="#i-info"/></svg><svg class="ic"><use href="#i-action"/></svg><i class="drop off"></i><svg class="ic"><use href="#i-select"/></svg><i class="drop"></i><svg class="ic"><use href="#i-expr"/></svg><i class="drop"></i><svg class="ic"><use href="#i-desel"/></svg><svg class="ic"><use href="#i-table"/></svg><svg class="ic"><use href="#i-abacus"/></svg><svg class="ic"><use href="#i-gear"/></svg><svg class="ic"><use href="#i-sigma"/></svg><svg class="ic"><use href="#i-measure"/></svg><i class="drop"></i><svg class="ic"><use href="#i-tip"/></svg><svg class="ic"><use href="#i-textann"/></svg><i class="drop"></i>
    </div>
  </section>

  <section class="window layout-window">
    <div class="titlebar"><span class="lights"><i></i><i></i><i></i></span><h1>*Population Distribution, USA</h1></div>
    <div class="toolbar two">
      <i class="grip first"></i>
      <svg class="ic"><use href="#i-save"/></svg><i class="sep"></i>
      <svg class="ic"><use href="#i-layout-new"/></svg><svg class="ic"><use href="#i-duplicate"/></svg><svg class="ic"><use href="#i-layouts"/></svg><svg class="ic"><use href="#i-folder"/></svg><svg class="ic"><use href="#i-saveas"/></svg><i class="sep"></i>
      <svg class="ic"><use href="#i-newpage"/></svg><i class="sep"></i>
      <svg class="ic"><use href="#i-print"/></svg><svg class="ic"><use href="#i-eimg"/></svg><svg class="ic"><use href="#i-esvg"/></svg><svg class="ic"><use href="#i-epdf"/></svg><svg class="ic"><use href="#i-undo"/></svg><svg class="ic"><use href="#i-redo"/></svg>
      <i class="grip"></i>
      <svg class="ic"><use href="#i-atlas"/></svg><svg class="ic"><use href="#i-first"/></svg><svg class="ic"><use href="#i-prev"/></svg>
      <div class="pagebox"><span>1</span><i></i></div>
      <svg class="ic"><use href="#i-next"/></svg><svg class="ic"><use href="#i-last"/></svg><svg class="ic"><use href="#i-printoff"/></svg><svg class="ic"><use href="#i-eatlas"/></svg><svg class="ic"><use href="#i-atlasset"/></svg>
    </div>
    <div class="toolbar three">
      <i class="grip first"></i>
      <svg class="ic"><use href="#i-zin"/></svg><svg class="ic"><use href="#i-zout"/></svg><svg class="ic"><use href="#i-z11"/></svg><svg class="ic"><use href="#i-full"/></svg><svg class="ic"><use href="#i-refresh"/></svg>
      <i class="grip"></i>
      <svg class="ic"><use href="#i-lock"/></svg><svg class="ic"><use href="#i-unlock"/></svg><svg class="ic"><use href="#i-group"/></svg><svg class="ic"><use href="#i-ungroup"/></svg><svg class="ic"><use href="#i-raise"/></svg><svg class="ic"><use href="#i-align"/></svg><svg class="ic"><use href="#i-distr"/></svg><svg class="ic"><use href="#i-resize"/></svg>
    </div>

    <div class="workspace">
      <nav class="toolbox">
        <i class="hgrip"></i>
        <svg class="ic"><use href="#i-hand"/></svg><svg class="ic"><use href="#i-zoomtool"/></svg><svg class="ic"><use href="#i-selmove"/></svg><span class="pressed"><svg class="ic"><use href="#i-content"/></svg></span><svg class="ic"><use href="#i-editnodes"/></svg><svg class="ic"><use href="#i-addmap"/></svg><svg class="ic"><use href="#i-addimg"/></svg><svg class="ic"><use href="#i-addlabel"/></svg><svg class="ic"><use href="#i-legend"/></svg><svg class="ic"><use href="#i-scale"/></svg><svg class="ic"><use href="#i-shape"/></svg><svg class="ic"><use href="#i-arrow"/></svg><svg class="ic"><use href="#i-addnodes"/></svg><svg class="ic"><use href="#i-html"/></svg><svg class="ic"><use href="#i-addtable"/></svg>
      </nav>
      <svg class="canvas" viewBox="92 328 1179 920">
        <rect x="92" y="328" width="1179" height="920" fill="#ebebeb"/>
        <path d="M92.500 330v918" stroke="#a9a9a9" stroke-width="1.500"/>
        <rect x="119" y="355" width="1151" height="892.500" fill="#d7d7d7"/>
        <path d="M92 1247.500h1178" stroke="#bdbdbd"/>
        <rect x="122" y="330" width="1148" height="25" fill="url(#hticks)"/>
        <rect x="94" y="356" width="25" height="889" fill="url(#vticks)"/>
        <path d="M119 330v25M94 626h25" stroke="#f04a43" stroke-width="1.600"/>
        <g class="rlabel">
          <text x="174.500" y="344">0</text><text x="244.500" y="344">20</text><text x="314.500" y="344">40</text><text x="385" y="344">60</text><text x="455" y="344">80</text><text x="525" y="344">100</text><text x="595" y="344">120</text><text x="665" y="344">140</text><text x="735" y="344">160</text><text x="805" y="344">180</text><text x="875" y="344">200</text><text x="945" y="344">220</text><text x="1015" y="344">240</text><text x="1085" y="344">260</text><text x="1155" y="344">280</text><text x="1225.500" y="344">300</text>
        </g>
        <g class="rlabel v">
          <text transform="translate(107.500 365.500) rotate(-90)">-20</text><text transform="translate(107.500 435.500) rotate(-90)">0</text><text transform="translate(107.500 505.500) rotate(-90)">20</text><text transform="translate(107.500 576) rotate(-90)">40</text><text transform="translate(107.500 646) rotate(-90)">60</text><text transform="translate(107.500 716) rotate(-90)">80</text><text transform="translate(107.500 786) rotate(-90)">100</text><text transform="translate(107.500 856.500) rotate(-90)">120</text><text transform="translate(107.500 926.500) rotate(-90)">140</text><text transform="translate(107.500 996.500) rotate(-90)">160</text><text transform="translate(107.500 1067) rotate(-90)">180</text><text transform="translate(107.500 1137) rotate(-90)">200</text><text transform="translate(107.500 1207) rotate(-90)">220</text>
        </g>
        <rect x="187.500" y="445.500" width="1041.500" height="736" fill="#969696"/>
        <rect x="172.700" y="430.700" width="1042" height="738" fill="#fff"/>
        <g transform="translate(520 750) scale(.33333)" stroke="#505050" stroke-width="2.600" stroke-linejoin="round">
          <g fill="#f7fbff">
            <path d="M180 268l103 23-21 133-4 24-14 2-4 12-77-112zM272 92l18 4-6 22 6 14 4 14 10 12-4 18-4 14 8 2 4 8 6 20 30 2-12 68-53-7-49-15 12-58 4-10 6-12 7-14-7-10zM290 96l189 27-9 107-118-14-4 14-30-2-6-16-4-12-12-4 4-18 4-14-8-12-4-16-8-18zM352 216l118 14-7 111-129-15zM283 291l53 7-2 28 38 7-16 107-94-16zM356 440l116 13-9 131-77-6-32 6-2 8h-14zM479 123l111 7 3 42 5 40-124-5zM474 207l124 5-4 20 6 18v28l6 18-8 7-14-6-14 2-102-11zM468 288l102 11 14-3 14 7 8 15 4 20 6 20 12 19-130-5v-27l-35-4zM498 372l130 5 4 12 4 12v58l-142-6zM600 278h92l4 12 10 10 6 18-6 10-10 12v14l-80 4-6-22-6-12-4-12 6-14zM638 468l90 0-4 10 6 4-10 26-8 16-6 20 2 18-56-2-2-14-10 0zM722 508l44-4v96l4 26-22 2-6-10-40-2 10-26-6-8 2-16-2-20 8-20zM870 412l-4-16 10-16 16-26 8 10 30-6 14 8-10 14-8 10-8 14-8 22-16 4-16-6zM1000 194l30-6-4 20v38l-14 2-4-20zM1030 188l6-12 8 40 8 24-26 6 2-30zM1036 176l6-18 2-42 10-2 6-8 14 4 8 6 6 30 6 10 12 12-10 12-8 12-8-4-8 14-6 4-2 10-8 2-2 14z"/>
          </g>
          <g fill="#cbddf1">
            <path d="M150 76l22 8 6 12-8 14 8 8 10-20-4-30 88 24-16 80-24-7-10 3-26-2-30-6-8-20-10-8 6-8-8-12 6-10-6-14zM148 132l10 8 8 20 30 6 26-3 34 9 7 10-7 14-6 12-4 10-12 58-127-31 5-27 14-28 8-24zM372 333l126 12-4 108-138-13zM262 424l94 16-18 152-42-10-74-42 10-12v-18l10-16-2-32 4-12 14-2zM472 453l164 6 4 41-2 46-10-4-12 4-16-4-14 4-12-6-16-2-10-6-16-6-2-60-59-2zM590 130l32-2 4-10 6 14 12 8 20 0 18 12 26-2-18 18-22 24-4 22 4 32 22 18 2 14h-92l-4-26 4-40zM668 192l22-10 8 10 14 2 14 12 24 8 6 20-6 14 2 26 2 26h-46l-16-22-2-14-12-8-10-10 2-14-6-18zM616 358l80-4 4 16 18 28 4 18 10 4-2 14 12 16-2 12-8 14-4-8h-90l-2-66-6-28zM652 562l56 3 4 10 0 14-6 12-4 13 40 2-2 12 10 8-6 8 14 6 2 8-12-2-4 10-14 2-10-8-14-2-6-8-14-2-8 6-20-2 2-38zM766 320l50-2 6 68-10 10-8 14-10 2-12 12-18 4 2-38zM762 430l24-6 10-10 10-6 8-14 14-2 14 6h16l8 14 8 6-2 16-12 12-64 10-58 8 10-12zM736 466l60-6 90-14-6 12-14 10-10 10-10 14-120 14zM766 504l54-4 8 36 10 38v32l-54 6 6 14-8 4-4-10-8 6-4-26zM862 494l22-8 22 4 30-2 28 20-10 18-8 14-12 12-12 14-10-12-12-14-18-22zM930 358l58-12 4 14 14 2-4 28-10-8-12 4-4-12-14-10-14 4zM1012 250l44-10 8 16 12 6-10 8-8-8-44 6zM1014 270l40-4 4 12-22 8-20 6z"/>
          </g>
          <g fill="#77add8">
            <path d="M708 300h46l8 20 2 70 4 20-8 18-2 18-12 4-8-4-4-20-14-10-4-16-18-26-2-18 6-18 14-14zM692 184l12 0 14-8 18-4-6 12 16 2 14 6 16-8 24-4 2 12 18 6-14 6-16-6-14 4-16 4-8 20-4-14-18-2-10-8-14-8zM788 206l16 2 16 4 6 12 4 20-8 10 4 6 12-10 8 18 2 16-8 22-22 10-40 2 8-28-8-16-2-22 4-20 8-10zM816 318l22 2 12 6 16-10 24-14 2 26-4 28-12 14-10 26-18 2-10-6-16-6zM890 296l92-14 12 12 2 14-2 14 6 6-10 14-98 14zM994 298l24 2 2 40-12 16-14-14 6-14-6-12zM862 446l22-16h16l12-14 10-10 4-14 10-10 6-18 14 2 12 8 10 4 2 18 14 10 6 24-70 8zM846 494l12-12 12-12 14-8 2-14 114-16 10 6-12 10 20 0-2 14-14 4 0 16-16 2-22 24-28-20-30 2-22-4zM820 500l42-6 10 12 10 14 20 22 20 24-8 20v20l-16 4-60 2v-38l-10-38z"/>
          </g>
          <g fill="#3b78b9">
            <path d="M471 464l59 2 2 60 16 8 12 2 10 6 16 0 14 4 14-4 14 4 20-2 2 46 10 26-4 20 0 16-18 4-10 14-18 12-12 4-14 14-4 14-2 20 2 22-14-4-26-10-6-16-4-14-12-14-8-18-8-12-10-12-26-8-8 16-8 4-10-6-18-14-4-14-6-20-12-12-14-16 75 2zM890 296l22-20-2-18 14-6 14 2 10-6 4-6-4-14 10-12 10-14 16-6h20l4 40 2 22 4 32 0 12 28-6-24 14-16-4-16-18zM788 612l50-6 60 2 4-4h14l6 18 12 22 20 30 12 26-2 30-8 16-8 2-4-12-12-12-8-10-10-10-6-14 0-20-10-14-14-8-12-8-10 6-6 8-18-14-18 2z"/>
            <path d="M954 752l-10 10-14 6-10-4" fill="none"/>
          </g>
          <path fill="#0c2b6b" d="M107 245l73 23-17 82 77 112 2 32-10 16v14l-4 12-54-6-4-16-14-10-16-12-12-4-4-22 4-10-12-24-4-12 4-14-8-16 0-16-14-20 4-14-4-12-2-20 12-22z"/>
          <path fill="none" stroke-width="5" d="M182 74l-2 18-6 16 6 6 6-14M732 640l14-6 8 8-8 14 10 8-4 6-10-8M756 634l18-6 8-4M1064 256l8 6-4 14 12-14-2 14M976 352l10 4 2 10-8-2 12 16-4-14 14 0M994 366l10 10-8 10 8 12-8 10 6 12M1000 434l6 8-14 6 16 4-12 8 16 0 4 8-12 2-8 14M688 180l6 8M706 154l14 0M726 154l6-8M1062 212l14-16 8 2 8-14"/>
          <path fill="none" stroke-width="3" d="M118 472l8 6M128 478l8-2M146 494l8 4M150 510v4"/>
        </g>
        <g filter="url(#coast)"><g transform="translate(300 500) scale(.33333)" fill="#f7fbff" stroke="#666" stroke-width="3.400" stroke-linejoin="round">
          <path d="M584 106l10 4 16 8 16-8 14-2 20 6 14 2 10 10 16 2 8 8 6 16 14 8 6 12 16 8 12 14 10 8 8 6 10 8 26 34-104 202-22-8-18-10-10-10-6-20-14-14-18-10-32-6-28 10-14 16-20 4-50 4-40-8-40-4 90-4 30-24-16-14-16-12-22-8 22-20 2-18-22 0 4-14-4-16 8-22 22-8 18-6 14 8 12 0 8 6 10-2 10-18-22-14-26-18-4-12 6-10-2-12 46 6 12 14 10 16 4-28-12-14z"/>
          <path fill="none" stroke="#555" stroke-width="5" d="M700 126l8 10M570 160l22 10 2 16-16-6zM590 386l10-14 20-4 12 10-4 16-40-2M626 386l30 0 4 22-28 0-4-14 20-8 8 20-20-8M508 430l22-18 30-6-4 16-28 12-16-4 34-12M360 388l40-2 34 8 2 22-14 6-4-20-20-6-20 2M380 394l30 4 24-4-4 30M286 374l30 6 40 2M300 380l30 6 20-2M170 294l20 8 14 16 16 10-20-4-20-14zM456 150l8 18 10 6-4 12-14-24M434 248l4 18 14 0-4-12zM388 188l4 14M350 280l4 10M106 182l14 2M110 164l4 12M122 214l6 0M130 240v6M136 252l0 18M150 264h4M148 290h10M226 346h14M254 356h12M270 362l14 4M380 392l4 16M474 414l4 10M484 436v4M440 408l60-4 50-4 50-14"/>
          <path d="M712 442l22 10 4 34 16 2 14-4 8 12v34l8 50 16 16 0 20-12 16-12-4-30-4-6-40 4-30-4-40-22-52-14-10z" fill="#fff"/>
          <path fill="none" stroke="#5c5c5c" stroke-width="7" d="M742 500v60l4 20 2 44 14 2-4-30 6-26-10-16 8-20-8-20 10-18-4-10M750 520l22 4-2 22-24 4M748 566l28 6-4 20-24 4M772 500v40l6 30-2 24 4 30-14 4M752 610l22 4"/>
        </g></g>
        <g fill="#fff" stroke="#777" stroke-width="1.200"><path d="M254.500 872h3M258 874.500l2 1M263 880l3 2v5l-2-2zM267 887l5 4 0 4M270 903l4 3 2 7-9 1-1-5z"/><path d="M952 1034.500h2M958 1029l6-2.500h6l-3 4-8 2zM966 1028l8-2 2-2M976 1025h3M978 1030h3"/></g>
        <rect x="238" y="494.500" width="910.500" height="573.500" fill="none" stroke="#5aa2dc" stroke-width="1.200"/>
        <rect x="238" y="494.500" width="910.500" height="573.500" fill="none" stroke="#7d2450" stroke-width="1.200" stroke-dasharray="3.500 2"/>
        <g fill="none" stroke="#5c9fd6" stroke-width="1.200"><path d="M254.500 495v16h-16M685 495v16h16v-16M1132 495v16h16M238 773.500h16.500v16H238M1148 773.500h-16v16h16M238 1051.500h16.500v16M685 1067v-15.500h16V1067M1132 1067v-15.500h16"/></g>
      </svg>

      <aside class="panels">
        <i class="vsplit"></i>
        <div class="tabs"><span class="tab on t-items">Items</span><span class="tab t-undo">Undo History</span></div>
        <div class="dockhead"><span>Items</span><svg class="dockbtn" viewBox="0 0 24 24"><use href="#dock-float"/></svg><svg class="dockbtn" viewBox="0 0 24 24"><use href="#dock-close"/></svg></div>
        <div class="tree">
          <div class="treehead">
            <span><svg width="27" height="22" viewBox="0 0 27 22"><path d="M1 12c6-9 18-9 24 0-6 9-18 9-24 0zM1 6C8 1 18 1 25 5" fill="#f6f6f6" stroke="#777" stroke-width="1.300"/><circle cx="13" cy="11" r="6" fill="#aaa" stroke="#666"/><circle cx="13" cy="11" r="3" fill="#222"/></svg></span>
            <span><svg width="22" height="27" viewBox="0 0 22 27"><path d="M4.500 14V9c0-9 13-9 13 0v5" fill="none" stroke="#777" stroke-width="3.600"/><path d="M4.500 14V9c0-9 13-9 13 0v5" fill="none" stroke="#eee" stroke-width="1.200"/><rect x="1" y="13" width="20" height="13" rx="2" fill="#666" stroke="#555"/></svg></span>
            <span class="col">Item</span>
          </div>
          <div class="treerow"><i class="check"><svg viewBox="0 0 20 20"><path d="M5 10l3.500 6L14 4" fill="none" stroke="#000" stroke-width="2.800"/></svg></i><i class="check"></i><svg class="mini" viewBox="3 1 35 36"><use href="#i-map" width="40" height="40"/></svg><b>Map 1</b></div>
        </div>
        <i class="hsplit"></i>
        <div class="tabs second"><span class="tab on t-layout">Layout</span><span class="tab t-props">Item Properties</span><span class="tab t-guides">Guides</span></div>
        <div class="dockhead lower"><span>Layout</span><svg class="dockbtn" viewBox="0 0 24 24"><use href="#dock-float"/></svg><svg class="dockbtn" viewBox="0 0 24 24"><use href="#dock-close"/></svg></div>
        <div class="scroller">
          <div class="form">
            <h2><i class="tri"></i>General settings</h2>
            <div class="box general"><label>Reference map</label><div class="combo"><svg class="mini" viewBox="3 1 35 36"><use href="#i-map" width="40" height="40"/></svg><span>Map 1</span><i class="dn"></i></div></div>
            <h2 class="g2"><i class="tri"></i>Guides and Grid</h2>
            <div class="box grid">
              <label>Grid spacing</label>
              <div class="row"><div class="spin"><span>10.00</span><em><i class="up"></i><i class="dn"></i></em></div><div class="combo"><span>mm</span><i class="dn"></i></div></div>
              <label class="l2">Grid offset</label>
              <div class="row offs"><div class="pair"><div class="spin"><span>x: 0.00</span><em><i class="up"></i><i class="dn off"></i></em></div><div class="spin"><span>y: 0.00</span><em><i class="up"></i><i class="dn off"></i></em></div></div><div class="combo"><span>mm</span><i class="dn"></i></div></div>
              <label class="l3">Snap tolerance</label>
              <div class="spin wide"><span>5 px</span><em><i class="up"></i><i class="dn"></i></em></div>
            </div>
          </div>
          <div class="scrollbar"><span class="sbtn"><i class="up"></i></span><span class="thumb"></span><span class="track"></span><span class="sbtn bottom"><i class="dn"></i></span></div>
        </div>
      </aside>
    </div>

    <footer class="status">
      <span class="st-sel">1 item selected</span><span class="st-x">x: 0 mm</span><span class="st-y">y: 56 mm</span><span class="st-page">page: 1</span>
      <div class="zoombox"><span>75.3%</span><em><i class="dn"></i></em></div>
      <div class="slider"><i class="fill"></i><i class="knob"></i><i class="rail"></i></div>
      <svg class="sizer" width="20" height="20" viewBox="0 0 20 20"><path d="M16 2v2M16 7v2M11 7v2M16 12v2M11 12v2M6 12v2M16 17v2M11 17v2M6 17v2M1 17v2" stroke="#aaa" stroke-width="2"/></svg>
    </footer>
  </section>
</main>
</body>
</html>
```

FILE: styles.css
```css
* { box-sizing: border-box; }
body { margin: 0; background: #fff; font-family: Inter, "Liberation Sans", sans-serif; font-size: 20.8px; letter-spacing: 0.12px; color: #111; width: 1952px; height: 1332px; overflow: hidden; }
i, em { font-style: normal; display: block; flex: none; }
svg { display: block; flex: none; }
.defs { position: absolute; }
h1, h2 { margin: 0; font-size: inherit; }

.desktop { position: relative; margin: 23px 0 0 15px; width: 1916px; height: 1274px; overflow: hidden; background: #c4c4c4; }

/* menu bar */
.menubar { height: 36px; display: flex; align-items: center; background: linear-gradient(90deg, #e4edf7, #e6eef8 60%, #edf3f9); color: #262b31; font-size: 21.7px; white-space: nowrap; padding-left: 8px; }
.apple { width: 21px; height: 27px; margin-top: -3px; }
.m-app { margin-left: 34px; width: 108.500px; font-size: 22.3px; letter-spacing: .6px; }
.m-layout { width: 101.500px; }
.m-edit { width: 71px; }
.m-view { width: 82px; }
.m-items { width: 88.500px; }
.m-add { width: 125px; }
.tray { display: flex; margin-left: auto; padding-right: 7px; }
.tray svg { height: 30px; }
.w42 { width: 42px; } .w46 { width: 46px; } .w48 { width: 48px; } .w50 { width: 50px; }

/* slivers of the browser window at the back */
.backdrop { height: 1238px; background: linear-gradient(#8299b3 0 4px, #f3f3f3 4px 104px, #e8e8e8 110px, #bcbcbc 165px, #888 165px 167px, #c9c9c9 168px, #a7a7a7 227px, #888 227px 229px, #c4c4c4 230px); }
.strip { width: 13px; height: 1238px; display: flex; flex-direction: column; overflow: hidden; background: #b7b7b7; color: #111; }
.strip > div { flex: none; overflow: hidden; display: flex; flex-direction: column; align-items: flex-end; white-space: nowrap; line-height: 1; }
.s-sky { height: 80px; background: linear-gradient(#7590b0, #8aa9cb); }
.s-black { height: 55px; background: #202020; }
.s-black i { width: 18px; height: 20px; margin: 17px -10px 0 0; border-radius: 50%; background: #bdbdbd; }
.s-round { height: 66px; background: #cfcfcf; border-bottom: 1px solid #999; }
.s-round i { width: 40px; height: 50px; margin-top: 10px; border: 1px solid #999; border-radius: 50%; }
.s-grey { height: 78px; background: linear-gradient(#d2d2d2, #acacac); }
.s-navy { height: 68px; background: #1b1764; border-left: 1px solid #999; }
.s-gap { height: 36px; background: #b5b5b5; border-bottom: 1px solid #4f67a0; }
.s-blue { height: 59px; background: #9ea5b4; color: #26336c; padding-top: 21px; font-size: 18px; }
.s-head { height: 133px; background: #b9b9b9; border-bottom: 1px solid #6b81b4; padding-top: 29px; }
.s-head .big { font-size: 32px; color: #050505; }
.s-head .sm { font-size: 17px; color: #2d3e75; margin-top: 14px; }
.s-line { height: 55px; border-bottom: 1px solid #6b81b4; }
.s-line2 { height: 47px; border-bottom: 1px solid #6b81b4; background: linear-gradient(#999, #bbb 20px); }
.s-s { height: 53px; background: #9b9b9b; padding-top: 17px; font-size: 30px; }
.s-s span, .s-end span { margin-right: -15px; }
.s-in { height: 83px; background: #a0a6b3; padding-top: 39px; color: #343a4e; }
.s-in span { margin-right: -3px; }
.s-th { height: 250px; background: #bababa; padding-top: 40px; gap: 38px; border-bottom: 1px solid #6b81b4; }
.s-th b { color: #2d3e75; margin-right: -8px; }
.s-line3 { height: 47px; background: linear-gradient(#999, #bbb 18px); border-bottom: 1px solid #6b81b4; }
.s-end { height: 130px; background: #9ea5b1; padding-top: 17px; font-size: 30px; gap: 44px; }
.s-end b { font-size: 19px; color: #2d3e75; }

/* windows */
.window { position: absolute; left: 13px; }
.main-window { top: 41px; width: 1910px; height: 110px; border-radius: 7px 0 0 0; overflow: hidden; background: #f5f5f5; }
.layout-window { top: 142px; width: 1894px; height: 1132px; border-radius: 8px; overflow: hidden; background: #ebebeb; box-shadow: 0 0 2px 1px rgba(0,0,0,.5), 0 0 7px rgba(0,0,0,.35); }
.titlebar { height: 36px; position: relative; display: flex; align-items: center; justify-content: center; background: linear-gradient(#e9e8e9, #d1cfd1); border-bottom: 1px solid #aaa; color: #272727; padding-top: 2px; }
.titlebar.inactive { background: #f6f6f6; border-color: #d3d3d3; color: #a8a8a8; }
.titlebar h1 { font-weight: 400; font-size: 20.800px; letter-spacing: .2px; }
.main-window h1 { padding-left: 47px; }
.lights { position: absolute; left: 13px; top: 9px; display: flex; gap: 13px; }
.lights i { width: 20px; height: 20px; border-radius: 50%; background: #ec6a5e; border: 1px solid rgba(0,0,0,.12); }
.lights i:nth-child(2) { background: #f5bf4f; }
.lights i:nth-child(3) { background: #61c554; }
.inactive .lights i { background: #dcdcdc; }

.toolbar { height: 64px; display: flex; align-items: center; background: linear-gradient(#f5f5f5, #e5e5e5); border-bottom: 1px solid #a4a4a4; padding-top: 1px; }
.toolbar.two, .toolbar.three { background: linear-gradient(#f5f5f5, #ebebeb); border-bottom: 2px solid #b5b5b5; }
.toolbar.two { padding-top: 2px; }
.toolbar.three { height: 63px; padding-top: 2px; }
.ic { width: 40px; height: 40px; margin: 0 7.100px; overflow: visible; }
.grip { width: 8px; height: 28px; margin: 0 5.500px 0 13.500px; background: radial-gradient(circle at 1px 1px, #b5b5b5 1px, transparent 1.300px) 0 0/5px 5px; }
.grip.first { margin: 0 5px 0 7.400px; }
.grip.third { margin: 0 4.500px 0 13.500px; }
.sep { width: 2px; height: 31px; margin: 0 4.700px 0 4.800px; background: linear-gradient(90deg, #c2c2c2 50%, #fff 50%); }
.pressed { border: 1.500px solid #a3a3a3; border-radius: 4px; background: #d5d5d5; height: 50px; width: 52.200px; margin: 0 1px; display: flex; align-items: center; justify-content: center; flex: none; }
.drop { width: 0; border: 7px solid transparent; border-top: 9px solid #3c3c3c; border-bottom: 0; margin: 0 4.500px 0 1px; }
.drop.off { border-top-color: #a5a5a5; }
.pagebox { width: 137px; height: 49px; margin: 0 2px 0 1px; display: flex; border: 2px solid #a9a9a9; border-radius: 4px; background: #fff; }
.pagebox span { flex: 1; padding: 9px 0 0 5px; color: #555; }
.pagebox i { width: 33px; background: #f3f3f3; border-left: 1px solid #c6c6c6; display: flex; align-items: center; justify-content: center; }
.pagebox i::after { content: ""; border: 6px solid transparent; border-top: 8px solid #bdbdbd; border-bottom: 0; }

.ratio { font: 600 15px Inter, sans-serif; text-anchor: middle; letter-spacing: -0.6px; }
.info-i { font: italic bold 24px "Liberation Serif", serif; text-anchor: middle; fill: #fff; }
.eps { font: 54px "Liberation Serif", serif; fill: #5d3b7c; }
.tee { font: 24px "Liberation Serif", serif; text-anchor: middle; fill: #333; stroke: #333; stroke-width: .4; }
.tee.small { font-size: 21px; }
.land { fill: #8b8b8b; stroke: none; }

/* workspace */
.workspace { height: 920px; display: flex; }
.toolbox { width: 64px; display: flex; flex-direction: column; align-items: center; padding: 11px 0 0 4px; background: linear-gradient(90deg, #f5f5f5, #ececec); }
.toolbox .ic { margin: 6.300px 0; }
.toolbox .pressed { width: 52px; margin: 1.300px 2.500px 1.300px 0; }
.toolbox .pressed .ic { margin: 0 -3px 0 0; }
.hgrip { width: 28px; height: 8px; margin-bottom: 4px; background: radial-gradient(circle at 1px 1px, #b5b5b5 1px, transparent 1.300px) 0 0/5px 5px; }
.canvas { width: 1179px; height: 920px; }
.rlabel { font: 15px Inter, sans-serif; letter-spacing: -0.1px; fill: #4a4a4a; }
.rlabel.v { text-anchor: end; }

.panels { position: relative; width: 651px; display: flex; flex-direction: column; padding-left: 9.500px; }
.vsplit { position: absolute; left: 4px; top: 450px; width: 2px; height: 28px; background: repeating-linear-gradient(#bbb 0 2px, transparent 2px 5px); }
.tabs { height: 45px; padding-top: 3px; display: flex; align-items: flex-end; border-bottom: 2px solid #b2b2b2; flex: none; }
.tab { height: 39px; border: 1.500px solid #adadad; border-bottom: 0; border-left: 0; border-radius: 0 4px 0 0; background: #dadada; display: flex; align-items: center; justify-content: center; padding-top: 6px; white-space: nowrap; }
.tab.on { height: 44px; margin-bottom: -2px; background: linear-gradient(#f7f7f7, #ededed); border-left: 1.500px solid #adadad; border-radius: 4px 4px 0 0; padding-top: 4px; }
.second .tab { padding-top: 3px; }
.second .tab.on { padding-top: 1px; }
.t-items { width: 95px; } .t-undo { width: 170px; }
.t-layout { width: 108px; } .t-props { width: 193px; } .t-guides { width: 108.500px; }
.dockhead { height: 39.500px; flex: none; display: flex; align-items: center; padding: 3px 5.500px 0 7px; }
.dockhead span { flex: 1; padding-top: 3px; }
.dockbtn { width: 23px; height: 23px; margin: -2px 0 0 8px; }
.tree { height: 203px; flex: none; border: 1.500px solid #b5b5b5; background: #fff; margin-right: 2px; }
.treehead { height: 34px; display: flex; border-bottom: 2px solid #a5a5a5; background: linear-gradient(#fbfbfb, #ececec 55%, #e8e8e8); }
.treehead span { width: 44px; border-right: 1px solid #c5c5c5; display: flex; align-items: center; justify-content: center; padding: 2px 7px 0 0; }
.treehead span.col { width: auto; border: 0; padding: 1px 0 0 6px; }
.treerow { height: 30px; display: flex; align-items: center; padding: 0 0 0 6px; }
.check { width: 23px; height: 23px; border: 2px solid #b6b6b6; background: #fff; margin-right: 21px; }
.mini { width: 23px; height: 22px; }
.treerow .mini { margin-left: 1.500px; }
.treerow b { margin: -4px 0 0 12.500px; font-size: 21px; font-weight: 600; letter-spacing: .1px; }
.hsplit { width: 28px; height: 2px; margin: 5px auto 3px; flex: none; background: repeating-linear-gradient(90deg, #bbb 0 2px, transparent 2px 5px); }
.tabs.second { height: 45px; }
.dockhead.lower { height: 38px; padding-top: 1px; }
.scroller { flex: 1; display: flex; min-height: 0; }
.form { width: 600px; margin-right: 17.500px; padding: 21px 0 0 20px; }
.form h2 { height: 30px; display: flex; align-items: center; color: #3e3e3e; font-weight: 600; font-size: 21.3px; letter-spacing: .1px; padding: 0 0 4px 2px; }
.tri { border: 8.500px solid transparent; border-top: 12px solid #3a3a3a; border-bottom: 0; margin-right: 15px; }
.form h2.g2 { height: 43.500px; padding-top: 11px; }
.box { width: 580px; border: 1.500px solid #d2d2d2; border-radius: 3px; background: #e8e8e8; padding: 20px; }
.box.general { height: 83px; display: flex; align-items: flex-start; }
.general label { width: 161px; padding-top: 7px; white-space: nowrap; }
.general .combo { width: 374px; }
.combo { height: 39px; flex: none; border: 1.500px solid #a6a6a6; border-radius: 4px; background: linear-gradient(#fff, #ececec); display: flex; align-items: center; padding: 0 10px 0 7px; }
.combo .mini { margin: 0 7px 0 3px; }
.combo span { flex: 1; padding-top: 2px; }
.dn { border: 6.500px solid transparent; border-top: 8.500px solid #565656; border-bottom: 0; }
.dn.off { border-top-color: #a8a8a8; }
.up { border: 6.500px solid transparent; border-bottom: 8.500px solid #565656; border-top: 0; }
.box.grid { height: 345px; padding-top: 22px; }
.grid label { display: block; height: 25px; line-height: 25px; margin-top: -1px; }
.row { display: flex; gap: 10.500px; align-items: center; margin-top: 10.500px; height: 39px; }
.row .combo { width: 262px; }
.row .spin { width: 262px; position: relative; }
.row > .spin { margin-top: 2px; }
.spin { height: 37px; border: 1.500px solid #a3a3a3; border-radius: 4px; background: #fff; display: flex; }
.spin span { flex: 1; padding: 5px 0 0 6px; }
.spin em { width: 24px; border-left: 1.500px solid #aaa; background: #f4f4f4; border-radius: 0 3px 3px 0; display: flex; flex-direction: column; align-items: center; justify-content: center; gap: 6px; }
.grid .l2 { margin-top: 13px; }
.row.offs { height: 88px; margin-top: 11px; }
.pair { display: flex; flex-direction: column; gap: 14px; }
.grid .l3 { margin-top: 13px; }
.spin.wide { margin-top: 12.500px; width: 535px; }
.scrollbar { width: 22px; border-left: 1px solid #bdbdbd; display: flex; flex-direction: column; background: #e1e1e1; }
.sbtn { height: 20px; flex: none; background: #f7f7f7; border-bottom: 1px solid #bbb; display: flex; align-items: center; justify-content: center; padding-top: 3px; }
.sbtn.bottom { height: 22px; border-top: 1px solid #bbb; border-bottom: 0; padding-top: 0; }
.thumb { height: 164px; flex: none; background: linear-gradient(90deg, #fff, #f1f1f1); border-bottom: 1px solid #b1b1b1; }
.track { flex: 1; }

/* status bar */
.status { height: 49px; display: flex; align-items: center; padding: 3px 0 0 10px; white-space: nowrap; }
.st-sel { width: 936.500px; } .st-x { width: 174px; } .st-y { width: 174.500px; } .st-page { width: 174.500px; }
.status span { flex: none; }
.zoombox { width: 210px; height: 39px; margin-top: -2px; flex: none; display: flex; border: 1.500px solid #a3a3a3; border-radius: 4px; background: #fff; }
.zoombox span { flex: 1; padding: 6px 0 0 5px; }
.zoombox em { width: 34px; border-left: 1px solid #bbb; background: #f3f3f3; display: flex; align-items: center; justify-content: center; border-radius: 0 3px 3px 0; }
.slider { display: flex; align-items: center; margin: -4px 0 0 11px; width: 162px; flex: none; }
.fill { width: 11px; height: 9px; background: #6398e0; border: 1.500px solid #3c6fbd; border-radius: 3px 0 0 3px; border-right: 0; }
.knob { width: 21px; height: 21px; border: 1.500px solid #999; border-radius: 4px; background: #fbfbfb; }
.rail { flex: 1; height: 8px; border: 1.500px solid #a3a3a3; background: #d0d0d0; border-radius: 0 3px 3px 0; border-left: 0; }
.sizer { margin: 20px 0 0 19px; }
```
